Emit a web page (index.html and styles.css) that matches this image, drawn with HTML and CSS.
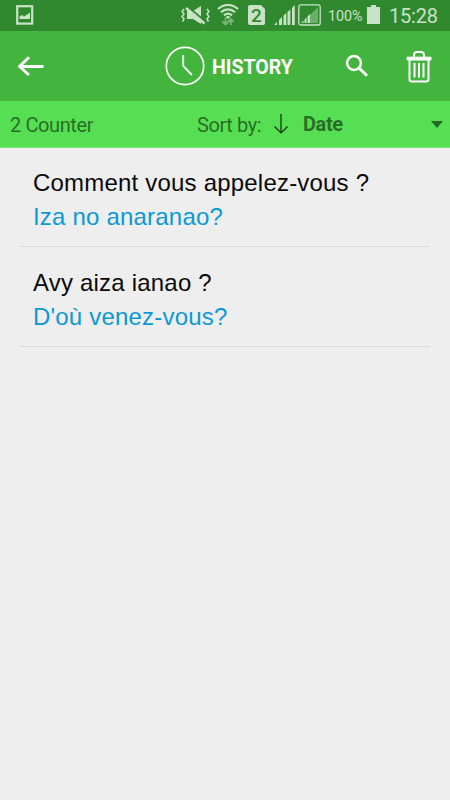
FILE: index.html
```
<!DOCTYPE html>
<html lang="en">
<head>
<meta charset="utf-8">
<title>History</title>
<link rel="stylesheet" href="styles.css">
</head>
<body>
<div class="status">
  <svg class="picture" width="18" height="20" viewBox="0 0 18 20"><rect x="1.200" y="1.200" width="15" height="17.400" fill="none" stroke="currentColor" stroke-width="2.200"/><path d="M3.500 14V11.500L6 10l2 1.500L12 9l2-1.500V14z" fill="currentColor"/></svg>
  <svg class="mute" width="29" height="22" viewBox="0 0 29 22"><path d="M6 6h6l8-5v18l-8-5H6z" fill="currentColor"/><path d="M6.500 1.500L25 17" stroke="#31892f" stroke-width="2"/><path d="M5 3L23.500 18.500" stroke="currentColor" stroke-width="2.500"/><path d="M3 4L1 6.500 3 9 1 11.500 3 14 1.500 16.500M26 4l2 2.500L26 9l2 2.500-2 2.500 1.500 2.500" fill="none" stroke="currentColor" stroke-width="1.500"/></svg>
  <svg class="wifi" width="22" height="22" viewBox="0 0 22 22"><g fill="none" stroke="currentColor" stroke-width="2.200"><path d="M1 5C7-.5 15-.5 21 5"/><path d="M4 8.300c4-3.800 10-3.800 14 0"/><path d="M7 11.300c2.500-2.200 5.500-2.200 8 0"/></g><path d="M8.500 13q2.500-2 5 0L11 15z" fill="currentColor"/><g fill="none" stroke="#79b776" stroke-width="1.800"><path d="M8.500 13.500v7M5.500 17.500l3 3 3-3M14 21v-6M11.500 17.500l2.500-2.500 2.500 2.500"/></g></svg>
  <span class="sim"><span class="sim-number">2</span></span>
  <svg class="signal" width="22" height="20" viewBox="0 0 22 20" fill="currentColor"><path d="M0 20l3-3v3zM5 15l3-3v8H5zM9.500 10.500l2.800-2.500v12H9.500zM13.500 7l2.800-2.500V20h-2.800zM18 3l2.800-3v20H18z"/></svg>
  <svg class="signal-box" width="23" height="22" viewBox="0 0 23 22"><rect x=".8" y=".8" width="21.400" height="20.200" rx="2" fill="none" stroke="currentColor" stroke-width="1.300"/><path d="M12 11l8-8v16h-8z" fill="#6daf6a"/><path d="M3 19l2.500-2.500V19zM6.500 15.500L8.500 13.500V19h-2zM9.500 12.500l2.500-2.500v9H9.500z" fill="currentColor"/></svg>
  <span class="percent">100%</span>
  <svg class="battery" width="13" height="19" viewBox="0 0 13 19" fill="currentColor"><path d="M4 0h5v2h4v17H0V2h4z"/></svg>
  <span class="time">15:28</span>
</div>
<header class="toolbar">
  <svg class="back" width="28" height="20" viewBox="0 0 28 20" fill="none" stroke="currentColor" stroke-width="2.800"><path d="M26.500 10.500H3M12 1.200L2.500 10.500l9.500 8.500"/></svg>
  <svg class="clock" width="40" height="40" viewBox="0 0 40 40" fill="none" stroke="currentColor"><circle cx="20" cy="20" r="18.700" stroke-width="1.700"/><path d="M18.200 9v11l8.700 9" stroke-width="1.800"/></svg>
  <h1 class="title">HISTORY</h1>
  <svg class="search" width="24" height="24" viewBox="0 0 24 24" fill="none" stroke="currentColor"><circle cx="9" cy="9" r="6.900" stroke-width="2.500"/><path d="M14 14l8 7.800" stroke-width="3"/></svg>
  <svg class="trash" width="26" height="33" viewBox="0 0 26 33" fill="none" stroke="currentColor"><path d="M8 7V5q0-3 3-3h4q3 0 3 3v2" stroke-width="2"/><path d="M1 10V7.200h24V10z" fill="currentColor" stroke-width="1"/><path d="M3.500 10v19q0 2.500 2.500 2.500h14q2.500 0 2.500-2.500V10" stroke-width="2"/><path d="M8.500 13v14.500M13 13v14.500M17.500 13v14.500" stroke-width="2"/></svg>
</header>
<div class="sortbar">
  <span class="count">2 Counter</span>
  <span class="sort-label">Sort by:</span>
  <svg class="down" width="16" height="22" viewBox="0 0 16 22" fill="none" stroke="#0c2c0a" stroke-width="1.200"><path d="M8 1v19M1.500 13.500L8 20l6.500-6.500"/></svg>
  <span class="sort-value">Date</span>
  <svg class="caret" width="12" height="7" viewBox="0 0 12 7" fill="#236a22"><path d="M0 0h12L6 7z"/></svg>
</div>
<main class="list">
  <article class="entry"><p>Comment vous appelez-vous ?</p><p class="translation">Iza no anaranao?</p></article>
  <article class="entry"><p>Avy aiza ianao ?</p><p class="translation">D'où venez-vous?</p></article>
</main>
</body>
</html>
```
FILE: styles.css
```
* { box-sizing: border-box; }
body { margin: 0; height: 800px; background: #eee; font-family: Roboto, sans-serif; overflow: hidden; }
svg, span { flex: none; display: block; }
.status { height: 31px; display: flex; align-items: flex-start; background: #31892f; color: #c9e2c7; padding-left: 16px; }
.picture { margin-top: 5px; }
.mute { margin: 5px 0 0 147px; }
.wifi { margin: 4px 0 0 7px; }
.sim { width: 17px; height: 20px; margin: 5px 0 0 9px; background: currentColor; border-radius: 2px; clip-path: polygon(0 0, 76% 0, 100% 20%, 100% 100%, 0 100%); }
.sim-number { color: #31892f; font-size: 19px; font-weight: 500; line-height: 21px; text-align: center; }
.signal { margin: 5px 0 0 9px; }
.signal-box { margin: 4px 0 0 2px; }
.percent { width: 38px; margin-left: 7px; font-size: 14.3px; line-height: 32px; }
.battery { margin: 5px 0 0 1px; }
.time { margin-left: 9px; font-size: 20px; letter-spacing: -.2px; line-height: 32px; }
.toolbar { height: 70px; display: flex; align-items: center; background: #43b53f; color: #fff; padding-left: 17px; }
.clock { margin-left: 120px; }
.title { width: 82px; margin: 3px 0 0 7px; font-size: 19.5px; line-height: 24px; font-weight: 700; white-space: nowrap; }
.search { margin-left: 51px; }
.trash { margin-left: 37px; }
.sortbar { height: 47px; display: flex; align-items: center; background: #57df53; border-bottom: 1px solid #82df80; color: #286f26; padding-left: 10px; font-size: 20px; letter-spacing: -.4px; line-height: 24px; }
.count { width: 187px; padding-top: 2px; }
.sort-label { width: 76px; padding-top: 2px; }
.sort-value { width: 128px; margin-left: 14px; font-weight: 700; }
.list { padding: 0 20px; }
.entry { height: 99.5px; padding: 19px 13px 0; border-bottom: 1px solid #dadada; font: 24px/34px "Liberation Sans", Arial, sans-serif; letter-spacing: .2px; color: #0a0a0a; }
.entry:first-child { height: 99px; padding-top: 18px; }
.entry p { margin: 0; white-space: nowrap; }
.entry .translation { color: #0c99d5; }
```
